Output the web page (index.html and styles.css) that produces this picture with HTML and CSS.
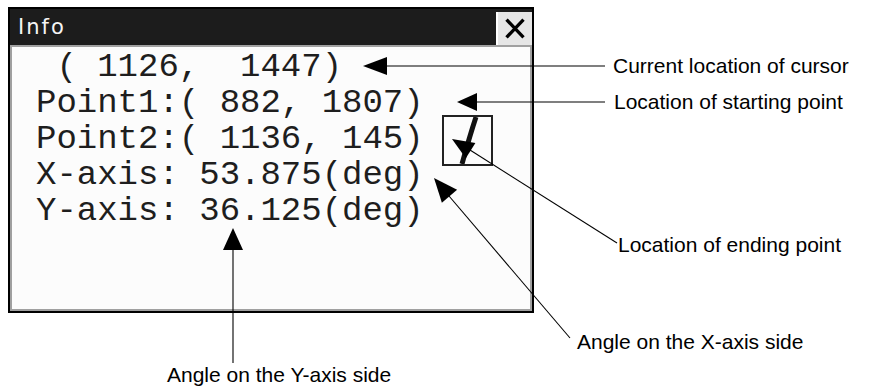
FILE: index.html
```html
<!DOCTYPE html>
<html lang="en">
<head>
    <meta charset="UTF-8">
    <title>Info window</title>
    <link rel="stylesheet" href="styles.css">
</head>
<body>

<div class="figure">
    <div class="window">
        <div class="titlebar">
            <span class="title">Info</span>
            <span class="close">
                <svg width="36" height="33" viewBox="0 0 36 33">
                    <path d="M9 7 L27 26 M27 7 L9 26" stroke="#000" stroke-width="3.5" fill="none"/>
                </svg>
            </span>
        </div>
        <div class="client">
<pre class="readout"> ( 1126,  1447)
Point1:( 882, 1807)
Point2:( 1136, 145)
X-axis: 53.875(deg)
Y-axis: 36.125(deg)</pre>
            <div class="preview">
                <svg width="47" height="47" viewBox="0 0 47 47">
                    <path d="M32 0 Q26 18 18 47" stroke="#111" stroke-width="5" fill="none"/>
                </svg>
            </div>
        </div>
    </div>

    <!-- leader lines for the callouts -->
    <svg class="leaders" width="874" height="389" viewBox="0 0 874 389">
        <g fill="#000" stroke="none">
            <polygon points="363,66 387,57 387,75"/>
            <polygon points="457,102 477,93 477,111"/>
            <polygon points="452,139 465.8,158.3 475.4,143.1"/>
            <polygon points="434,178 441.9,202.8 457.1,189.8"/>
            <polygon points="233,228 223,250 243,250"/>
        </g>
        <g stroke="#000" stroke-width="1.1" fill="none">
            <line x1="387" y1="66" x2="605" y2="66"/>
            <line x1="477" y1="102" x2="605" y2="102"/>
            <line x1="470" y1="150" x2="617" y2="243"/>
            <line x1="449" y1="196" x2="570" y2="338"/>
            <line x1="233" y1="250" x2="233" y2="363"/>
        </g>
    </svg>

    <span class="note note-cursor">Current location of cursor</span>
    <span class="note note-start">Location of starting point</span>
    <span class="note note-end">Location of ending point</span>
    <span class="note note-xaxis">Angle on the X-axis side</span>
    <span class="note note-yaxis">Angle on the Y-axis side</span>
</div>

</body>
</html>
```

FILE: styles.css
```css
body {
    margin: 0;
    background: #fff;
}

.figure {
    position: relative;
    width: 874px;
    height: 389px;
    padding: 7px 0 0 8px;
    box-sizing: border-box;
}

.window {
    width: 526px;
    height: 306px;
    border: 2px solid #000;
    box-sizing: border-box;
    display: flex;
    flex-direction: column;
    background: #1c1c1c;
}

.titlebar {
    height: 36px;
    display: flex;
    align-items: center;
    justify-content: space-between;
    padding-left: 8px;
}

.title {
    font-family: "DejaVu Sans", sans-serif;
    font-size: 21px;
    letter-spacing: 2px;
    color: #f4f4f4;
}

.close {
    width: 36px;
    height: 33px;
    margin: 2px 0 0 0;
    background: #e6e6e6;
    border-left: 2px solid #fff;
    box-sizing: border-box;
    display: flex;
    align-items: center;
    justify-content: center;
}

.close svg {
    display: block;
}

.client {
    flex: 1;
    display: flex;
    align-items: flex-start;
    background: #fcfcfc;
    border: 2px solid #a0a0a0;
    border-bottom-width: 2px;
}

.readout {
    margin: 0;
    padding: 2px 0 0 24px;
    font-family: "Liberation Mono", monospace;
    font-size: 34px;
    line-height: 36px;
    color: #1e1e1e;
}

.preview {
    width: 51px;
    height: 51px;
    margin: 68px 0 0 18px;
    border: 2px solid #222;
    box-sizing: border-box;
}

.preview svg {
    display: block;
}

.leaders {
    position: absolute;
    left: 0;
    top: 0;
    pointer-events: none;
}

.note {
    position: absolute;
    font-family: "Liberation Sans", Arial, sans-serif;
    font-size: 21px;
    line-height: 24px;
    color: #000;
    white-space: nowrap;
}

.note-cursor {
    left: 613px;
    top: 54px;
}

.note-start {
    left: 614px;
    top: 90px;
}

.note-end {
    left: 618px;
    top: 233px;
}

.note-xaxis {
    left: 577px;
    top: 330px;
}

.note-yaxis {
    left: 167px;
    top: 363px;
}
```
